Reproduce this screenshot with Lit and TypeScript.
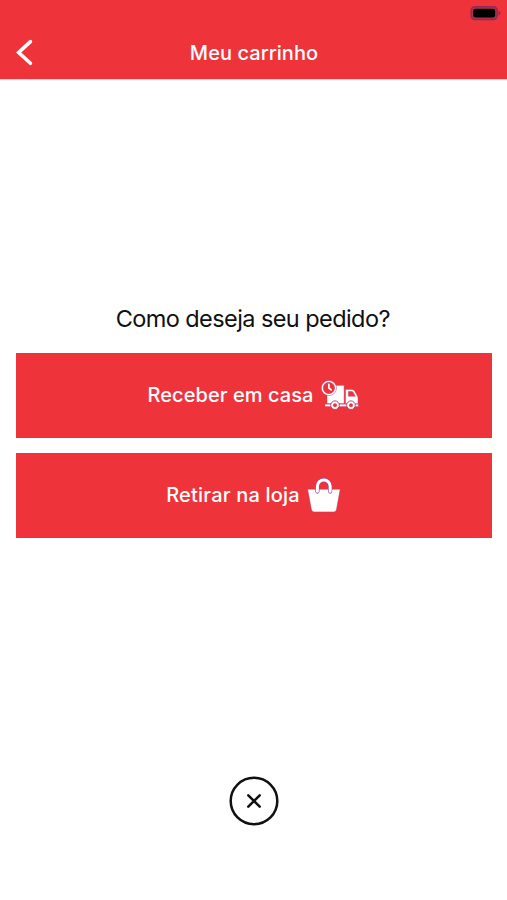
import { LitElement, html, css } from "lit";
import { customElement } from "lit/decorators.js";

@customElement("app-root")
export class AppRoot extends LitElement {
  static styles = css`
    :host {
      display: flex;
      flex-direction: column;
      height: 900px;
      background: #fff;
      font-family: Inter, "Liberation Sans", sans-serif;
      overflow: hidden;
    }
    svg { display: block; flex: none; }
    header {
      height: 79px;
      background: #ee343a;
      color: #fff;
      box-shadow: 0 1px 0 #fbd3d4;
      flex: none;
    }
    .status {
      height: 26px;
      display: flex;
      justify-content: flex-end;
      padding: 5px 5px 0 0;
      box-sizing: border-box;
    }
    .nav {
      height: 53px;
      display: grid;
      grid-template-columns: 60px 1fr 60px;
    }
    .back, .close {
      border: 0;
      padding: 0;
      background: none;
      color: inherit;
    }
    .back { padding: 12px 0 0 15px; justify-self: start; align-self: start; }
    h1 {
      margin: 0;
      padding-left: 1px;
      text-align: center;
      font-size: 20px;
      line-height: 54px;
      font-weight: 550;
      letter-spacing: 0.06px;
      white-space: nowrap;
    }
    main {
      flex: 1;
      display: flex;
      flex-direction: column;
      padding: 224px 15px 0 15.5px;
    }
    h2 {
      margin: 0 0 17.5px;
      padding-right: 2px;
      height: 32px;
      line-height: 32px;
      text-align: center;
      font-size: 23.5px;
      font-weight: 400;
      letter-spacing: -0.58px;
      color: #101010;
      white-space: nowrap;
    }
    .option {
      height: 85px;
      margin: 0 0 15px;
      padding: 0;
      border: 0;
      display: flex;
      justify-content: center;
      align-items: center;
      gap: 7.5px;
      background: #ee343a;
      color: #fff;
      font: 550 20px/28px Inter, "Liberation Sans", sans-serif;
      letter-spacing: 0.07px;
      white-space: nowrap;
    }
    .delivery { padding-right: 1px; }
    .pickup { letter-spacing: 0.2px; }
    .close { align-self: center; margin-top: 223px; }
  `;

  render() {
    return html`
      <header>
        <div class="status">
          <svg width="32" height="16" viewBox="0 0 32 16">
            <rect x="1.2" y="1.7" width="26" height="12.8" rx="4" fill="#b5304a" stroke="#8f2b55" stroke-width="1.6"/>
            <rect x="3.2" y="3.7" width="22" height="8.8" rx="2.2" fill="#000"/>
            <path d="M28.5 5.8q2 .8 2 2.3t-2 2.3z" fill="#8f2b55"/>
          </svg>
        </div>
        <div class="nav">
          <button class="back" aria-label="Voltar">
            <svg width="19" height="28" viewBox="0 0 19 28">
              <path d="M15.4 3.6 3.7 14.5l11.7 10.8" fill="none" stroke="#fff" stroke-width="3.6" stroke-linecap="round" stroke-linejoin="miter"/>
            </svg>
          </button>
          <h1>Meu carrinho</h1>
        </div>
      </header>
      <main>
        <h2>Como deseja seu pedido?</h2>
        <button class="option delivery">
          <span>Receber em casa</span>
          <svg width="38" height="30" viewBox="0 0 38 30">
            <g stroke="#a84679" stroke-width=".4">
              <path d="M6 5.4h17.1v18.2H6z" fill="#fff"/>
              <path d="M24.6 9.4h6.2q2 0 3 1.8l2.6 4.8q.6 1 .6 2.2v5.6H24.6z" fill="#fff"/>
              <path d="M4 24.2h33.4v2.4H4z" fill="#fff"/>
            </g>
            <path d="M27.4 11.6h3.4q1 0 1.5 1l2 3.6h-6.9z" fill="#ee343a" stroke="#a84679" stroke-width=".5"/>
            <g fill="#fff" stroke="#b43c6d" stroke-width=".9">
              <circle cx="14" cy="25.2" r="4.3"/>
              <circle cx="30" cy="25.2" r="4.3"/>
            </g>
            <circle cx="14" cy="25.2" r="1.9" fill="#ee343a"/>
            <circle cx="30" cy="25.2" r="1.9" fill="#ee343a"/>
            <circle cx="7.9" cy="8" r="7.6" fill="#fff" stroke="#a84679" stroke-width=".5"/>
            <circle cx="7.9" cy="8" r="5.7" fill="#ee343a" stroke="#a84679" stroke-width=".5"/>
            <path d="M7.9 4.4V8l2.3 1.8" fill="none" stroke="#fff" stroke-width="1.7" stroke-linecap="round"/>
          </svg>
        </button>
        <button class="option pickup">
          <span>Retirar na loja</span>
          <svg width="34" height="35" viewBox="0 0 34 35">
            <path d="M.6 11.2h32.6l-3.7 20.3q-.4 2.4-2.6 2.4H7.1q-2.3 0-2.7-2.4z" fill="#fff" stroke="#b33c6c" stroke-width=".5"/>
            <path d="M10.4 13.6V8.4a6.4 6.4 0 0 1 12.8 0v5.2" fill="none" stroke="#8b559b" stroke-width="4.2" stroke-linecap="round"/>
            <path d="M10.4 13.2V8.4a6.4 6.4 0 0 1 12.8 0v4.8" fill="none" stroke="#fff" stroke-width="3" stroke-linecap="round"/>
          </svg>
        </button>
        <button class="close" aria-label="Fechar">
          <svg width="50" height="50" viewBox="0 0 50 50">
            <circle cx="25" cy="25" r="23.3" fill="none" stroke="#101010" stroke-width="2.5"/>
            <path d="m19.3 19.3 11.4 11.4m0-11.4L19.3 30.7" fill="none" stroke="#101010" stroke-width="2.5" stroke-linecap="round"/>
          </svg>
        </button>
      </main>
    `;
  }
}
